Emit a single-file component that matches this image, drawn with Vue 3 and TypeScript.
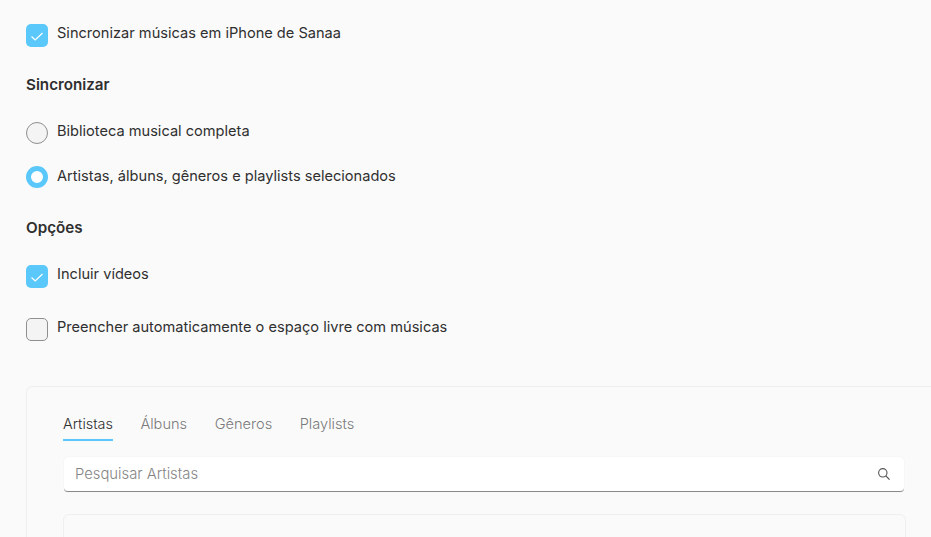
<script setup lang="ts">
const tabs: string[] = ['Artistas', 'Álbuns', 'Gêneros', 'Playlists']
</script>

<template>
  <main class="page">
    <label class="row first">
      <span class="box on">
        <svg viewBox="0 0 22 22" width="22" height="22"><path d="M5.5 11.5L9.2 15L16.5 8" fill="none" stroke="#fff" stroke-width="1.2" /></svg>
      </span>
      <span class="label">Sincronizar músicas em iPhone de Sanaa</span>
    </label>

    <h2 class="heading sync">Sincronizar</h2>
    <label class="row r1"><span class="radio"></span><span class="label">Biblioteca musical completa</span></label>
    <label class="row r2"><span class="radio on"></span><span class="label">Artistas, álbuns, gêneros e playlists selecionados</span></label>

    <h2 class="heading opts">Opções</h2>
    <label class="row c1">
      <span class="box on">
        <svg viewBox="0 0 22 22" width="22" height="22"><path d="M5.5 11.5L9.2 15L16.5 8" fill="none" stroke="#fff" stroke-width="1.2" /></svg>
      </span>
      <span class="label">Incluir vídeos</span>
    </label>
    <label class="row c2"><span class="box"></span><span class="label">Preencher automaticamente o espaço livre com músicas</span></label>

    <section class="panel">
      <nav class="tabs">
        <span v-for="(t, i) in tabs" :key="t" class="tab" :class="{ active: i === 0 }">{{ t }}</span>
      </nav>
      <div class="search">
        <span class="placeholder">Pesquisar Artistas</span>
        <svg viewBox="0 0 14 14" width="14" height="14"><circle cx="5.8" cy="5.8" r="4.2" fill="none" stroke="#555" stroke-width="1.1" /><path d="M8.9 8.9l3.6 3.8" fill="none" stroke="#555" stroke-width="1.2" /></svg>
      </div>
      <div class="list"></div>
    </section>
  </main>
</template>

<style>
html, body { margin: 0; background: #fafafa; overflow: hidden; }
</style>

<style scoped>
.page {
  width: 931px;
  height: 537px;
  overflow: hidden;
  box-sizing: border-box;
  padding: 24px 0 0 26px;
  background: #fafafa;
  font-family: Inter, "Noto Sans", sans-serif;
  color: #2f2f2f;
}
.row { display: flex; align-items: flex-start; gap: 9px; height: 23px; }
.label { font-size: 14.6px; line-height: 18px; }
.box, .radio {
  flex: none;
  width: 22px;
  height: 23px;
  box-sizing: border-box;
  border: 1px solid #8f8f8f;
  background: #f4f4f4;
}
.box { border-radius: 5px; }
.box.on { background: #5ac8fa; border: 0; }
.box svg { display: block; margin-top: 1px; }
.radio { border-radius: 50%; height: 22px; }
.radio.on { border: 5px solid #5ac8fa; background: #fff; }
.r2 .label { margin-top: 1px; }
.heading { margin: 0; font-size: 15.2px; line-height: 18px; font-weight: 600; color: #2f2f2f; }
.sync { margin-top: 29px; }
.r1 { margin-top: 28px; }
.r2 { margin-top: 21px; }
.opts { margin-top: 30px; }
.c1 { margin-top: 28px; }
.c2 { margin-top: 30px; }
.panel {
  margin-top: 45px;
  height: 200px;
  width: 940px;
  box-sizing: border-box;
  padding: 27px 0 0 36px;
  border: 1px solid #eeeeee;
  border-radius: 6px 0 0 0;
}
.tabs { display: flex; gap: 27.5px; height: 27px; }
.tab {
  height: 25px;
  font-size: 14.6px;
  line-height: 20px;
  color: #7b7b7b;
  font-weight: 300;
}
.tab.active { color: #2f2f2f; border-bottom: 2px solid #5ac8fa; font-size: 14.4px; }
.search {
  margin: 16px 0 0 1px;
  width: 840px;
  height: 35px;
  box-sizing: border-box;
  padding: 0 13px 1px 11px;
  display: flex;
  align-items: center;
  justify-content: space-between;
  background: #fff;
  border-radius: 4px;
  border-bottom: 1px solid #8a8a8a;
  box-shadow: 0 0 1px rgba(0, 0, 0, 0.12);
}
.placeholder { font-size: 14.8px; color: #858585; font-weight: 300; }
.list {
  margin-top: 22px;
  width: 841px;
  height: 60px;
  border: 1px solid #efefef;
  border-radius: 6px;
}
</style>
